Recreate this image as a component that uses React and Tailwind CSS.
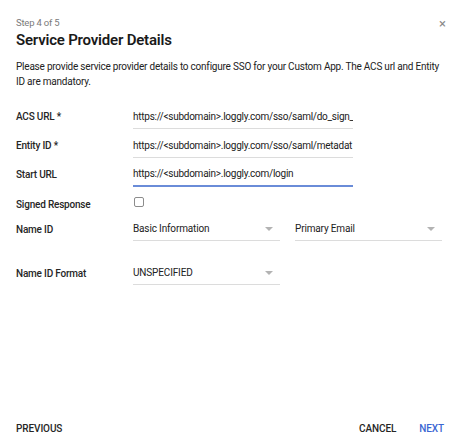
import React from "react";

const font = { fontFamily: "Roboto, 'Liberation Sans', sans-serif" };

const Arrow = () => (
  <svg width="8" height="4" viewBox="0 0 8 4" className="shrink-0">
    <path d="M0 0 L8 0 L4 4 Z" fill="#b3b3b3" />
  </svg>
);

const TextField = ({ value, active }) => (
  <div
    className={`w-[220px] h-[25px] flex items-center overflow-hidden whitespace-nowrap text-[10px] tracking-[-0.25px] text-[#212121] ${
      active ? "border-b-2 border-[#6a8cd8]" : "border-b border-[#dcdcdc]"
    }`}
  >
    {value}
  </div>
);

const Select = ({ value }) => (
  <div className="w-[147px] h-[24px] flex items-center justify-between pr-[7px] border-b border-[#dcdcdc] text-[10px] tracking-[-0.15px] text-[#212121]">
    <span>{value}</span>
    <Arrow />
  </div>
);

const Label = ({ children }) => (
  <div className="w-[117px] shrink-0 text-[10px] tracking-[-0.2px] font-medium text-[#262626]">{children}</div>
);

export default function App() {
  return (
    <div style={font} className="w-[460px] h-[443px] bg-white flex flex-col justify-between px-4">
      <div>
        <div className="flex items-center justify-between pt-[16px]">
          <span className="text-[9.5px] leading-[14px] tracking-[-0.2px] text-[#7a7a7a]">Step 4 of 5</span>
          <button className="text-[#8a8a8a] text-[13px] leading-none -mr-[2px]">×</button>
        </div>
        <h1 className="text-[15px] leading-[20px] font-semibold tracking-[-0.2px] text-[#1a1a1a]">
          Service Provider Details
        </h1>
        <p className="mt-[9px] w-[424px] text-[10px] leading-[15px] tracking-[-0.22px] text-[#222]">
          Please provide service provider details to configure SSO for your Custom App. The ACS url and Entity ID are
          mandatory.
        </p>

        <div className="mt-[15px] flex flex-col">
          <div className="flex items-center">
            <Label>ACS URL *</Label>
            <TextField value="https://<subdomain>.loggly.com/sso/saml/do_sign_" />
          </div>
          <div className="flex items-center mt-[4px]">
            <Label>Entity ID *</Label>
            <TextField value="https://<subdomain>.loggly.com/sso/saml/metadat" />
          </div>
          <div className="flex items-center mt-[4px]">
            <Label>Start URL</Label>
            <TextField value="https://<subdomain>.loggly.com/login" active />
          </div>
          <div className="flex items-center mt-[6px] h-[22px]">
            <Label>Signed Response</Label>
            <div className="w-[10px] h-[10px] ml-[1px] -mt-[5px] rounded-[2px] border border-[#8c8c8c]" />
          </div>
          <div className="flex items-center mt-[2px]">
            <Label>Name ID</Label>
            <div className="flex gap-[15px]">
              <Select value="Basic Information" />
              <Select value="Primary Email" />
            </div>
          </div>
          <div className="flex items-center mt-[20px]">
            <Label>Name ID Format</Label>
            <Select value="UNSPECIFIED" />
          </div>
        </div>
      </div>

      <div className="flex items-center justify-between pb-[7px] text-[10px] tracking-[-0.1px] font-medium">
        <button className="text-[#262626]">PREVIOUS</button>
        <div className="flex items-center gap-[23px]">
          <button className="text-[#262626]">CANCEL</button>
          <button className="text-[#3a66d2]">NEXT</button>
        </div>
      </div>
    </div>
  );
}
